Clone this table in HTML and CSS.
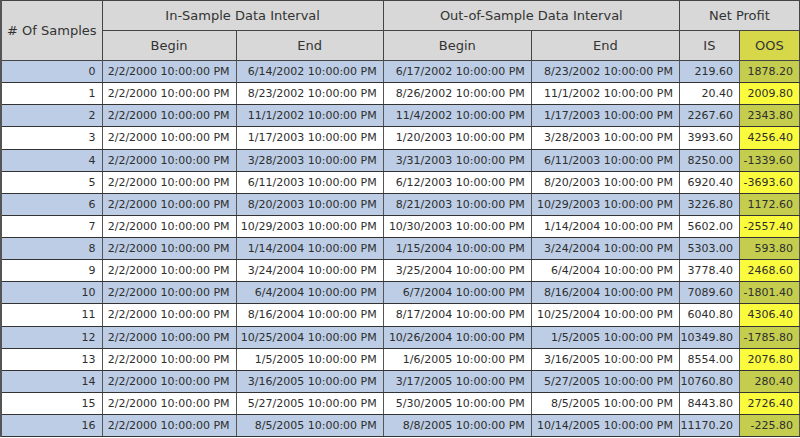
FILE: index.html
```html
<!DOCTYPE html>
<html>
<head>
<meta charset="utf-8">
<link rel="stylesheet" href="styles.css">
</head>
<body>
<table class="grid">
  <colgroup>
    <col class="c-n"><col class="c-d1"><col class="c-d2"><col class="c-d3"><col class="c-d4"><col class="c-is"><col class="c-oos">
  </colgroup>
  <thead>
    <tr class="h1">
      <th rowspan="2">#&nbsp;Of Samples</th>
      <th colspan="2">In-Sample Data Interval</th>
      <th colspan="2">Out-of-Sample Data Interval</th>
      <th colspan="2">Net Profit</th>
    </tr>
    <tr class="h2">
      <th>Begin</th><th>End</th><th>Begin</th><th>End</th><th>IS</th><th class="oos">OOS</th>
    </tr>
  </thead>
  <tbody>
    <tr class="alt"><td>0</td><td>2/2/2000 10:00:00 PM</td><td>6/14/2002 10:00:00 PM</td><td>6/17/2002 10:00:00 PM</td><td>8/23/2002 10:00:00 PM</td><td>219.60</td><td class="oos">1878.20</td></tr>
    <tr><td>1</td><td>2/2/2000 10:00:00 PM</td><td>8/23/2002 10:00:00 PM</td><td>8/26/2002 10:00:00 PM</td><td>11/1/2002 10:00:00 PM</td><td>20.40</td><td class="oos">2009.80</td></tr>
    <tr class="alt"><td>2</td><td>2/2/2000 10:00:00 PM</td><td>11/1/2002 10:00:00 PM</td><td>11/4/2002 10:00:00 PM</td><td>1/17/2003 10:00:00 PM</td><td>2267.60</td><td class="oos">2343.80</td></tr>
    <tr><td>3</td><td>2/2/2000 10:00:00 PM</td><td>1/17/2003 10:00:00 PM</td><td>1/20/2003 10:00:00 PM</td><td>3/28/2003 10:00:00 PM</td><td>3993.60</td><td class="oos">4256.40</td></tr>
    <tr class="alt"><td>4</td><td>2/2/2000 10:00:00 PM</td><td>3/28/2003 10:00:00 PM</td><td>3/31/2003 10:00:00 PM</td><td>6/11/2003 10:00:00 PM</td><td>8250.00</td><td class="oos">-1339.60</td></tr>
    <tr><td>5</td><td>2/2/2000 10:00:00 PM</td><td>6/11/2003 10:00:00 PM</td><td>6/12/2003 10:00:00 PM</td><td>8/20/2003 10:00:00 PM</td><td>6920.40</td><td class="oos">-3693.60</td></tr>
    <tr class="alt"><td>6</td><td>2/2/2000 10:00:00 PM</td><td>8/20/2003 10:00:00 PM</td><td>8/21/2003 10:00:00 PM</td><td>10/29/2003 10:00:00 PM</td><td>3226.80</td><td class="oos">1172.60</td></tr>
    <tr><td>7</td><td>2/2/2000 10:00:00 PM</td><td>10/29/2003 10:00:00 PM</td><td>10/30/2003 10:00:00 PM</td><td>1/14/2004 10:00:00 PM</td><td>5602.00</td><td class="oos">-2557.40</td></tr>
    <tr class="alt"><td>8</td><td>2/2/2000 10:00:00 PM</td><td>1/14/2004 10:00:00 PM</td><td>1/15/2004 10:00:00 PM</td><td>3/24/2004 10:00:00 PM</td><td>5303.00</td><td class="oos">593.80</td></tr>
    <tr><td>9</td><td>2/2/2000 10:00:00 PM</td><td>3/24/2004 10:00:00 PM</td><td>3/25/2004 10:00:00 PM</td><td>6/4/2004 10:00:00 PM</td><td>3778.40</td><td class="oos">2468.60</td></tr>
    <tr class="alt"><td>10</td><td>2/2/2000 10:00:00 PM</td><td>6/4/2004 10:00:00 PM</td><td>6/7/2004 10:00:00 PM</td><td>8/16/2004 10:00:00 PM</td><td>7089.60</td><td class="oos">-1801.40</td></tr>
    <tr><td>11</td><td>2/2/2000 10:00:00 PM</td><td>8/16/2004 10:00:00 PM</td><td>8/17/2004 10:00:00 PM</td><td>10/25/2004 10:00:00 PM</td><td>6040.80</td><td class="oos">4306.40</td></tr>
    <tr class="alt"><td>12</td><td>2/2/2000 10:00:00 PM</td><td>10/25/2004 10:00:00 PM</td><td>10/26/2004 10:00:00 PM</td><td>1/5/2005 10:00:00 PM</td><td>10349.80</td><td class="oos">-1785.80</td></tr>
    <tr><td>13</td><td>2/2/2000 10:00:00 PM</td><td>1/5/2005 10:00:00 PM</td><td>1/6/2005 10:00:00 PM</td><td>3/16/2005 10:00:00 PM</td><td>8554.00</td><td class="oos">2076.80</td></tr>
    <tr class="alt"><td>14</td><td>2/2/2000 10:00:00 PM</td><td>3/16/2005 10:00:00 PM</td><td>3/17/2005 10:00:00 PM</td><td>5/27/2005 10:00:00 PM</td><td>10760.80</td><td class="oos">280.40</td></tr>
    <tr><td>15</td><td>2/2/2000 10:00:00 PM</td><td>5/27/2005 10:00:00 PM</td><td>5/30/2005 10:00:00 PM</td><td>8/5/2005 10:00:00 PM</td><td>8443.80</td><td class="oos">2726.40</td></tr>
    <tr class="alt"><td>16</td><td>2/2/2000 10:00:00 PM</td><td>8/5/2005 10:00:00 PM</td><td>8/8/2005 10:00:00 PM</td><td>10/14/2005 10:00:00 PM</td><td>11170.20</td><td class="oos">-225.80</td></tr>
  </tbody>
</table>
</body>
</html>
```
FILE: styles.css
```css
html, body {
  margin: 0;
  padding: 0;
  background: #ffffff;
}
.grid {
  border-collapse: collapse;
  table-layout: fixed;
  width: 800px;
  font-family: "DejaVu Sans", Verdana, sans-serif;
  color: #2e2e2e;
  border-left: 2px solid #555;
  border-top: 1px solid #444;
}
.c-n { width: 101px; }
.c-d1 { width: 134px; }
.c-d2 { width: 147px; }
.c-d3 { width: 148px; }
.c-d4 { width: 148px; }
.c-is { width: 60px; }
.c-oos { width: 60px; }
.grid th {
  background: #d8d8d8;
  font-weight: normal;
  font-size: 13px;
  color: #333;
  text-align: center;
  padding: 0;
  border: 1px solid #444;
  white-space: nowrap;
}
.grid tr.h1 th { height: 29px; }
.grid tr.h2 th { height: 29px; }
.grid tr.h2 th.oos { background: #d6d84a; }
.grid td {
  font-size: 11px;
  height: 21.125px;
  padding: 0 6px 0 0;
  text-align: right;
  white-space: nowrap;
  border-top: 1px solid #333;
  border-bottom: 1px solid #333;
  border-left: 1px solid #555;
  border-right: 1px solid #555;
  background: #ffffff;
}
.grid tr.alt td { background: #bccde5; }
.grid td.oos { background: #fbfb3e; }
.grid tr.alt td.oos { background: #c4cd4e; }
```
